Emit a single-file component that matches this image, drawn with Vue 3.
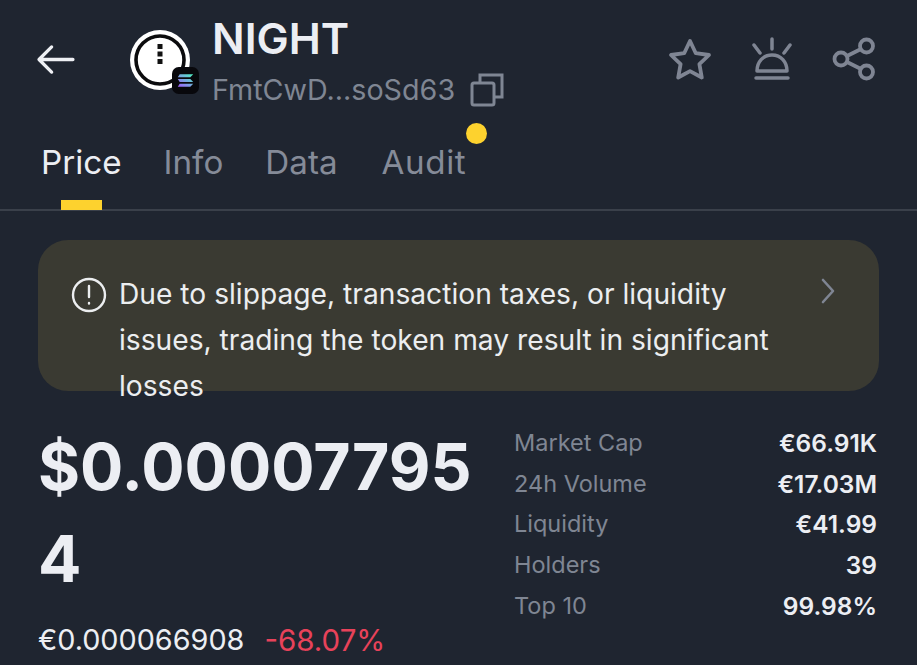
<script setup>
const tabs = ["Price", "Info", "Data", "Audit"];
const stats = [
  { label: "Market Cap", value: "€66.91K" },
  { label: "24h Volume", value: "€17.03M" },
  { label: "Liquidity", value: "€41.99" },
  { label: "Holders", value: "39" },
  { label: "Top 10", value: "99.98%" },
];
</script>

<template>
  <div class="page">
    <header class="head">
      <svg class="back" viewBox="0 0 40 32" fill="none" stroke="#eef0f4" stroke-width="3.4" stroke-linecap="round" stroke-linejoin="round">
        <path d="M38 16H3M16 3 3 16l13 13" />
      </svg>
      <div class="logo">
        <svg viewBox="0 0 60 60">
          <circle cx="30" cy="30" r="30" fill="#fff" />
          <circle cx="30" cy="30" r="24" fill="#fff" stroke="#0b0b0d" stroke-width="3.6" />
          <rect x="27.500" y="14" width="5" height="5" fill="#111" />
          <rect x="27.500" y="21.500" width="5" height="5" fill="#111" />
          <rect x="27.500" y="29" width="5" height="5" fill="#111" />
        </svg>
        <span class="chain">
          <svg viewBox="0 0 28 28">
            <defs>
              <linearGradient id="sol" x1="0" y1="1" x2="1" y2="0">
                <stop offset="0" stop-color="#a25cff" />
                <stop offset="1" stop-color="#4cf5c0" />
              </linearGradient>
            </defs>
            <rect width="28" height="28" rx="7" fill="#08080c" />
            <path d="M8 7.500h14l-3 3.200H6zM6 12.400h13l3 3.200H8zM8 17.300h14l-3 3.200H6z" fill="url(#sol)" />
          </svg>
        </span>
      </div>
      <div class="title">
        <div class="name">NIGHT</div>
        <div class="addr">
          <span>FmtCwD...soSd63</span>
          <svg class="copy" viewBox="0 0 34 34" fill="none" stroke="#7f8693" stroke-width="3">
            <rect x="2" y="10" width="22" height="22" rx="2" />
            <path d="M10 9V2h22v22h-7" />
          </svg>
        </div>
      </div>
      <div class="actions">
        <svg viewBox="0 0 44 44" fill="none" stroke="#7f8593" stroke-width="3.800" stroke-linejoin="round">
          <path d="m22 4 5.800 12.200 13.200 1.800-9.600 9.200 2.400 13.300L22 34.100 10.200 40.500l2.400-13.300L3 18l13.200-1.800z" />
        </svg>
        <svg viewBox="0 0 44 44" fill="none" stroke="#7f8593" stroke-width="3.500" stroke-linecap="round" stroke-linejoin="round">
          <path d="M22 2v10M4 8l6 8M40 8l-6 8M7 34c0-9 6-16 15-16s15 7 15 16zM6 41h32" />
        </svg>
        <svg viewBox="0 0 44 44" fill="none" stroke="#7f8593" stroke-width="3.800">
          <circle cx="34.500" cy="9" r="6.500" />
          <circle cx="9" cy="22" r="6.500" />
          <circle cx="34.500" cy="35" r="6.500" />
          <path d="m15 19 14-7M15 25l14 7" />
        </svg>
      </div>
    </header>

    <nav class="tabs">
      <div
        v-for="(tab, index) in tabs"
        :key="tab"
        class="tab"
        :class="{ 'tab--active': index === 0, 'tab--dot': tab === 'Audit' }"
      >
        {{ tab }}
      </div>
    </nav>

    <section class="notice">
      <svg class="notice__icon" viewBox="0 0 36 36" fill="none" stroke="#eceef0" stroke-width="2.400" stroke-linecap="round">
        <circle cx="18" cy="18" r="16" />
        <path d="M18 9v11M18 26v.5" />
      </svg>
      <p class="notice__text">Due to slippage, transaction taxes, or liquidity issues, trading the token may result in significant losses</p>
      <svg class="notice__more" viewBox="0 0 16 26" fill="none" stroke="#7f8593" stroke-width="2.600" stroke-linecap="round" stroke-linejoin="round">
        <path d="m3 2 10 11L3 24" />
      </svg>
    </section>

    <section class="market">
      <div class="quote">
        <div class="price">$0.000077954</div>
        <div class="sub">
          <span class="fiat">€0.000066908</span>
          <span class="change">-68.07%</span>
        </div>
      </div>
      <dl class="stats">
        <div v-for="row in stats" :key="row.label" class="stat">
          <dt>{{ row.label }}</dt>
          <dd>{{ row.value }}</dd>
        </div>
      </dl>
    </section>
  </div>
</template>

<style>
html,
body {
  background: #1f2530;
}
</style>

<style scoped>
.page {
  width: 917px;
  height: 665px;
  overflow: hidden;
  background: #1f2530;
  color: #eceef3;
  font-family: Inter, "Liberation Sans", sans-serif;
}

.head {
  display: flex;
  align-items: flex-start;
  height: 116px;
  padding: 0 41px 0 36px;
  box-sizing: border-box;
}

.back {
  width: 39px;
  height: 31px;
  margin-top: 44px;
  margin-right: 55px;
  flex: none;
}

.logo {
  position: relative;
  width: 60px;
  height: 60px;
  margin-top: 30px;
  margin-right: 22px;
  flex: none;
}

.logo > svg {
  display: block;
  width: 60px;
  height: 60px;
}

.chain {
  position: absolute;
  right: -9px;
  bottom: -4px;
  width: 27px;
  height: 27px;
}

.chain svg {
  display: block;
  width: 27px;
  height: 27px;
}

.title {
  flex: 1;
  padding-top: 13px;
}

.name {
  font-size: 43px;
  font-weight: 600;
  line-height: 50px;
}

.addr {
  display: flex;
  align-items: center;
  gap: 15px;
  margin-top: 4px;
  color: #7f8693;
  font-size: 28.700px;
  line-height: 46px;
}

.copy {
  width: 34px;
  height: 34px;
}

.actions {
  display: flex;
  align-items: center;
  gap: 38px;
  margin-top: 37px;
}

.actions svg {
  height: 44px;
  width: 44px;
}

.tabs {
  display: flex;
  gap: 42px;
  height: 95px;
  padding-left: 41px;
  border-bottom: 2px solid #3a404a;
  box-sizing: border-box;
  color: #858b98;
  font-size: 33.200px;
  line-height: 92px;
}

.tab {
  position: relative;
}

.tab--active {
  color: #eceef3;
}

.tab--active::after {
  content: "";
  position: absolute;
  left: 20px;
  bottom: -1px;
  width: 41px;
  height: 10px;
  background: #fdd22e;
}

.tab--dot {
  margin-left: 2px;
  letter-spacing: 0.6px;
}

.tab--dot::after {
  content: "";
  position: absolute;
  right: -21px;
  top: 7px;
  width: 21px;
  height: 21px;
  border-radius: 50%;
  background: #fdd22e;
}

.notice {
  display: flex;
  align-items: flex-start;
  height: 151px;
  margin: 29px 38px 0;
  padding: 31px 40px 0 33px;
  box-sizing: border-box;
  border-radius: 30px;
  background: #3a3a32;
}

.notice__icon {
  width: 36px;
  height: 36px;
  margin-top: 6px;
  margin-right: 12px;
  flex: none;
}

.notice__text {
  margin: 0;
  width: 670px;
  font-size: 28.200px;
  line-height: 46px;
  color: #eceef0;
}

.notice__more {
  width: 16px;
  height: 26px;
  margin-left: auto;
  margin-top: 7px;
  margin-right: 3px;
  flex: none;
}

.market {
  display: flex;
  padding: 30px 40px 0 38px;
}

.quote {
  width: 476px;
  flex: none;
}

.price {
  width: 450px;
  font-size: 64.300px;
  font-weight: 700;
  line-height: 92px;
  word-break: break-all;
}

.sub {
  display: flex;
  gap: 20px;
  margin-top: 17px;
  font-size: 28.800px;
  line-height: 36px;
}

.change {
  color: #e8425a;
  font-size: 29.500px;
}

.stats {
  flex: 1;
  margin: 2px 0 0;
}

.stat {
  display: flex;
  justify-content: space-between;
  font-size: 23.500px;
  line-height: 40.700px;
}

.stat dt {
  color: #7f8693;
}

.stat dd {
  margin: 0;
  font-size: 24.500px;
  font-weight: 600;
  color: #eceef3;
}
</style>
